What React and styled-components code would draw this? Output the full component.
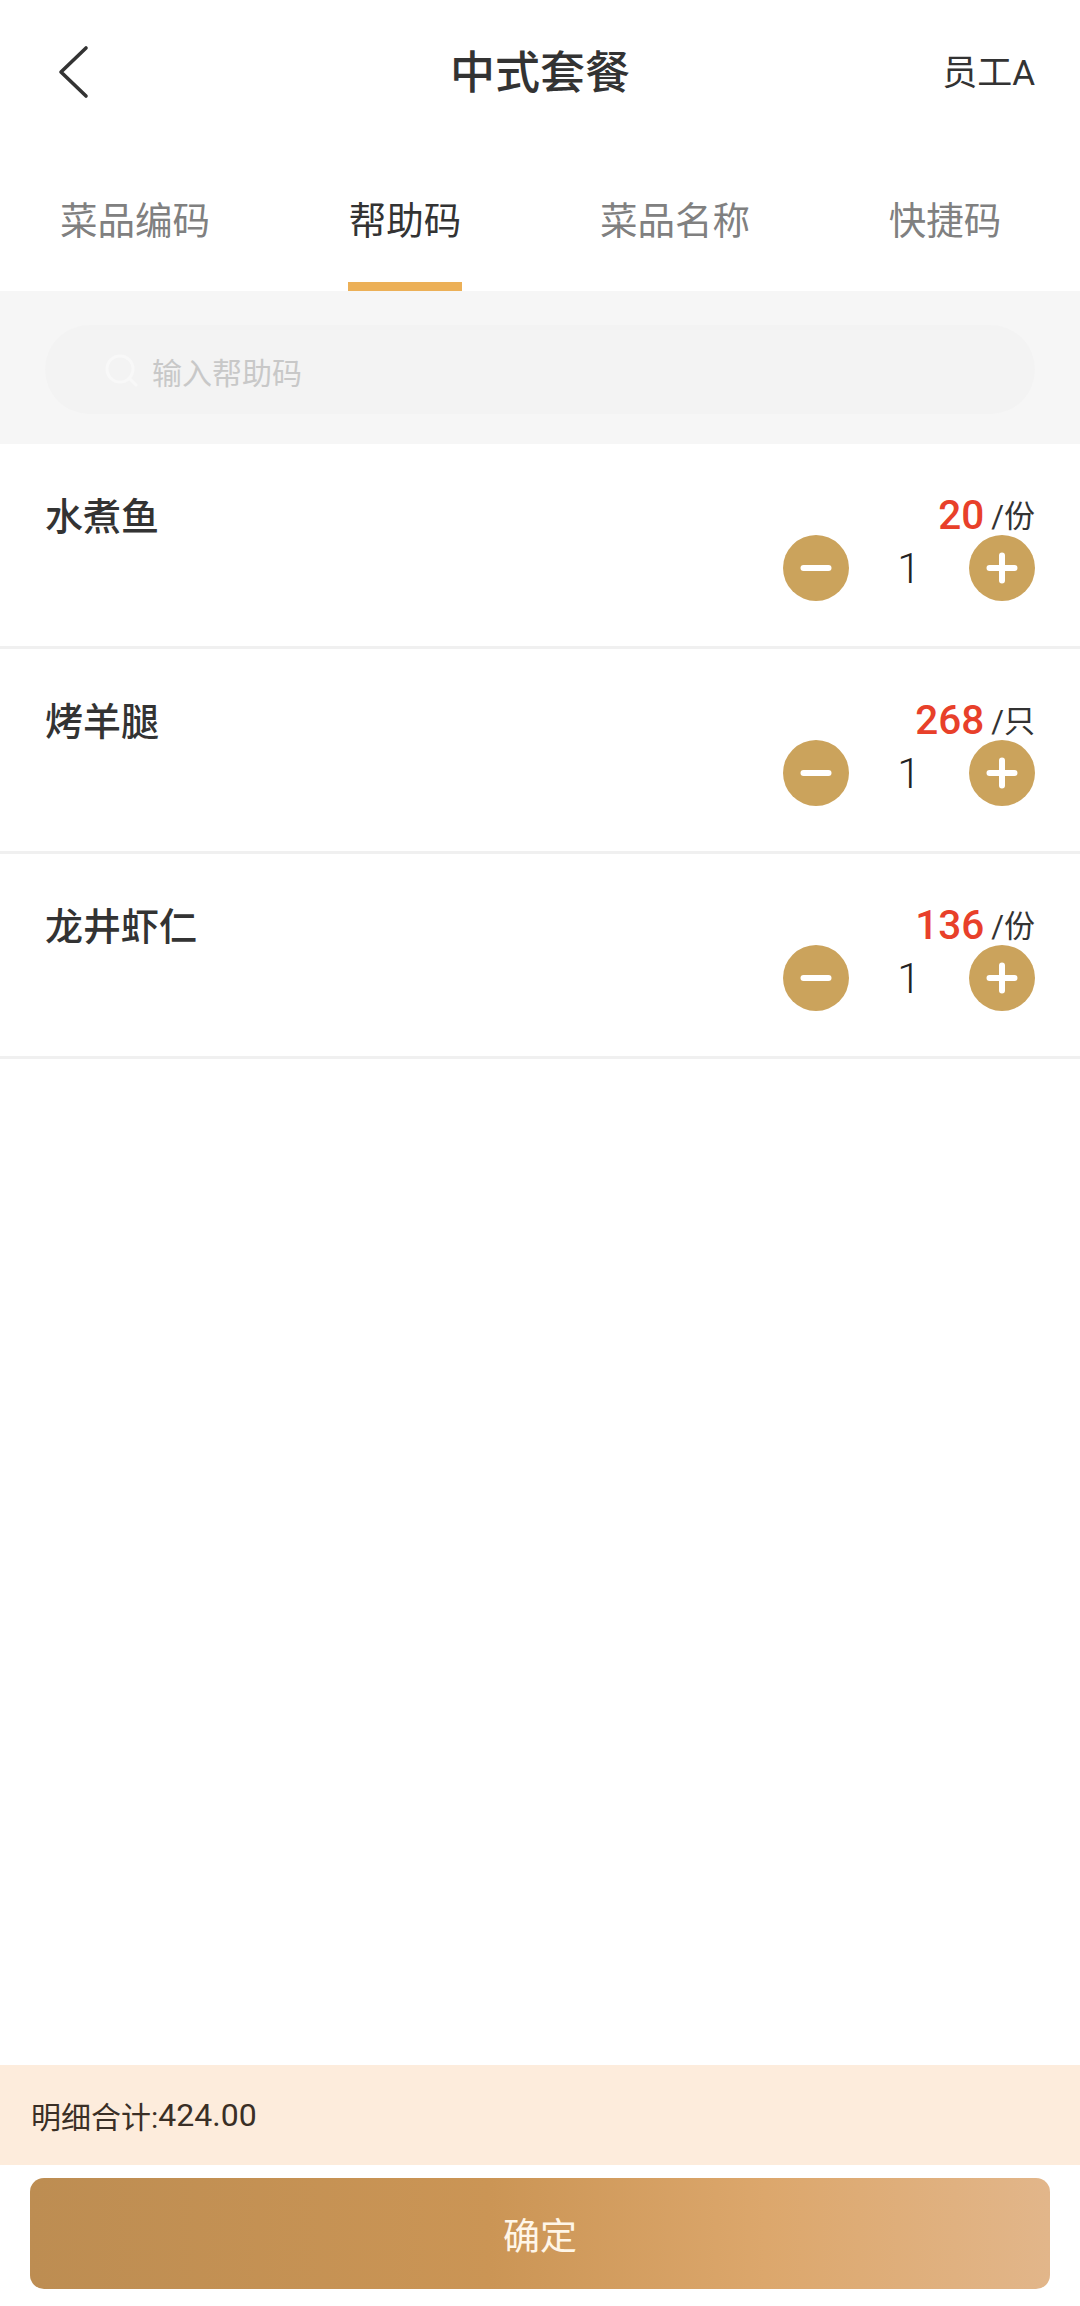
import styled, { createGlobalStyle } from "styled-components";

const GlobalStyle = createGlobalStyle`
  html, body {
    margin: 0;
    padding: 0;
    background: #fff;
  }
  * {
    box-sizing: border-box;
  }
`;

const tabs = ["菜品编码", "帮助码", "菜品名称", "快捷码"];

const dishes = [
  { name: "水煮鱼", price: "20", unit: "份", count: 1 },
  { name: "烤羊腿", price: "268", unit: "只", count: 1 },
  { name: "龙井虾仁", price: "136", unit: "份", count: 1 },
];

function App() {
  return (
    <Page>
      <GlobalStyle />
      <Header>
        <BackButton aria-label="back">
          <svg width="32" height="54" viewBox="0 0 32 54" fill="none">
            <path d="M28 3 L3 27 L28 51" stroke="#333" strokeWidth="3.6" strokeLinecap="round" strokeLinejoin="round" />
          </svg>
        </BackButton>
        <Title>中式套餐</Title>
        <Staff>员工A</Staff>
      </Header>

      <Tabs>
        {tabs.map((tab, i) => (
          <Tab key={tab} $active={i === 1}>
            {tab}
          </Tab>
        ))}
      </Tabs>

      <SearchArea>
        <SearchBar>
          <SearchIcon width="36" height="36" viewBox="0 0 36 36" fill="none">
            <circle cx="17" cy="17" r="13" stroke="#f8f8f8" strokeWidth="3" />
            <path d="M27 27 L33 33" stroke="#f8f8f8" strokeWidth="3" strokeLinecap="round" />
          </SearchIcon>
          <Placeholder>输入帮助码</Placeholder>
        </SearchBar>
      </SearchArea>

      <List>
        {dishes.map((dish) => (
          <Row key={dish.name}>
            <DishName>{dish.name}</DishName>
            <RowRight>
              <PriceLine>
                <Price>{dish.price}</Price>
                <Unit>/{dish.unit}</Unit>
              </PriceLine>
              <Stepper>
                <RoundButton aria-label="minus">
                  <svg width="36" height="36" viewBox="0 0 36 36">
                    <path d="M5.5 18 H30.5" stroke="#fff" strokeWidth="6" strokeLinecap="round" />
                  </svg>
                </RoundButton>
                <Count>{dish.count}</Count>
                <RoundButton aria-label="plus">
                  <svg width="36" height="36" viewBox="0 0 36 36">
                    <path d="M5.5 18 H30.5 M18 5.5 V30.5" stroke="#fff" strokeWidth="6" strokeLinecap="round" />
                  </svg>
                </RoundButton>
              </Stepper>
            </RowRight>
          </Row>
        ))}
      </List>

      <Summary>
        明细合计:<Amount>424.00</Amount>
      </Summary>
      <Footer>
        <ConfirmButton>确定</ConfirmButton>
      </Footer>
    </Page>
  );
}

const Page = styled.div`
  width: 1080px;
  height: 2306px;
  display: flex;
  flex-direction: column;
  background: #fff;
  color: #333;
  font-family: Roboto, "Noto Sans CJK SC", sans-serif;
  overflow: hidden;
`;

const Header = styled.header`
  height: 145px;
  display: grid;
  grid-template-columns: 1fr auto 1fr;
  align-items: center;
  padding: 0 45px;
`;

const BackButton = styled.button`
  justify-self: start;
  display: flex;
  margin: -2px 0 0 13px;
  padding: 0;
  border: none;
  background: none;
`;

const Title = styled.h1`
  margin: 2px 0 0;
  font-size: 45px;
  font-weight: 500;
  line-height: 60px;
  color: #333;
`;

const Staff = styled.div`
  justify-self: end;
  margin-top: 2px;
  font-size: 35px;
  line-height: 44px;
  color: #333;
`;

const Tabs = styled.nav`
  height: 146px;
  display: grid;
  grid-template-columns: repeat(4, 270px);
`;

const Tab = styled.div`
  display: flex;
  justify-content: center;
  align-items: center;
  position: relative;
  padding-bottom: 2px;
  font-size: 37.5px;
  color: ${(props) => (props.$active ? "#333" : "#808080")};

  &::after {
    content: "";
    display: ${(props) => (props.$active ? "block" : "none")};
    position: absolute;
    left: 78px;
    bottom: 0;
    width: 114px;
    height: 9px;
    background: #ecb057;
  }
`;

const SearchArea = styled.section`
  height: 153px;
  padding: 34px 45px 30px;
  background: #f6f6f6;
`;

const SearchBar = styled.div`
  height: 89px;
  display: flex;
  align-items: center;
  gap: 13px;
  padding-left: 58px;
  border-radius: 45px;
  background: #f3f3f3;
`;

const SearchIcon = styled.svg`
  flex: none;
`;

const Placeholder = styled.span`
  margin-top: 3px;
  font-size: 30px;
  color: #c8c8c8;
`;

const List = styled.ul`
  flex: 1;
  margin: 0;
  padding: 0;
  list-style: none;
`;

const Row = styled.li`
  height: 205px;
  display: flex;
  justify-content: space-between;
  align-items: flex-start;
  padding: 44px 45px 0;
  border-bottom: 3px solid #f0f0f0;
`;

const DishName = styled.div`
  margin-top: 2px;
  font-size: 38px;
  font-weight: 500;
  line-height: 54px;
  color: #333;
`;

const RowRight = styled.div`
  display: flex;
  flex-direction: column;
  align-items: flex-end;
`;

const PriceLine = styled.div`
  display: flex;
  align-items: baseline;
  gap: 7px;
  height: 47px;
  line-height: 55px;
`;

const Price = styled.span`
  font-size: 40.5px;
  font-weight: 500;
  color: #e8402a;
`;

const Unit = styled.span`
  position: relative;
  top: -2px;
  font-size: 31px;
  color: #333;
`;

const Stepper = styled.div`
  display: grid;
  grid-template-columns: 66px 120px 66px;
  align-items: center;
`;

const RoundButton = styled.button`
  width: 66px;
  height: 66px;
  display: flex;
  align-items: center;
  justify-content: center;
  padding: 0;
  border: none;
  border-radius: 50%;
  background: #cba35c;
`;

const Count = styled.span`
  text-align: center;
  font-size: 42px;
  font-weight: 300;
  color: #222;
`;

const Summary = styled.div`
  height: 100px;
  display: flex;
  align-items: center;
  padding-left: 31px;
  background: #fdecdc;
  font-size: 30px;
  color: #3a2f26;
`;

const Amount = styled.span`
  font-size: 32px;
`;

const Footer = styled.footer`
  height: 141px;
  padding: 13px 30px 17px;
`;

const ConfirmButton = styled.button`
  width: 100%;
  height: 111px;
  border: none;
  border-radius: 14px;
  background: linear-gradient(90deg, #bd8d52 0%, #cb9555 45%, #dca76c 72%, #e2b68a 100%);
  color: #fff6e8;
  font-family: inherit;
  font-size: 37px;
`;

export default App;
